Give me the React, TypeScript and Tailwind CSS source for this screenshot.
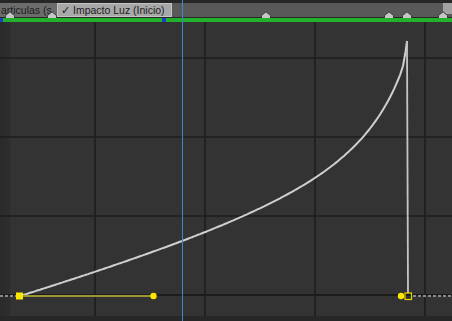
import React from 'react';

const markers = [10, 52, 266, 389, 407, 443];
const vGrid = [95, 205, 315, 425];
const hGrid = [58, 137, 216];

// speed curve, built from a rough fit of the reference
const curvePath = () => {
  const pts: string[] = [];
  for (let x = 20; x <= 400; x += 2) {
    const u = x - 20;
    const drop = 0.273 * u + (18.5 * u) / (440 - u);
    pts.push(`${x},${(296 - drop).toFixed(1)}`);
  }
  pts.push('403,66', '405.5,52', '407,41');
  return 'M' + pts.join(' L');
};

const Marker = ({ x }: { x: number }) => (
  <svg className="absolute top-[8px]" style={{ left: x - 6 }} width="12" height="10" viewBox="0 0 12 10">
    <path d="M1.5 9.5 V4.5 L6 0.8 L10.5 4.5 V9.5 Z" fill="#c6c6c6" stroke="#3a3a3a" strokeWidth="1" />
  </svg>
);

const App = () => {
  return (
    <div className="relative w-[452px] h-[321px] overflow-hidden bg-[#333333] flex flex-col font-['Liberation_Sans',sans-serif]">
      {/* top strip */}
      <div className="h-[3px] bg-[#262626] shrink-0" />
      <div className="relative h-[14px] bg-[#595959] shrink-0 flex items-stretch">
        <div className="w-[57px] bg-[#6c6c6c] whitespace-nowrap text-[10.5px] leading-[14px] text-[#1c1c1c] pl-[1px]">
          articulas (s
        </div>
        <div className="flex items-center gap-[3px] w-[115px] bg-[#a8a8a8] border border-[#c4c4c4] text-[10.5px] leading-[12px] text-[#1c1c1c] pl-[3px] whitespace-nowrap">
          <span className="text-[11px]">✓</span>
          <span>Impacto Luz (Inicio)</span>
        </div>
        <div className="absolute right-0 top-0 w-[9px] h-[11px] bg-[#a2a2a2]" />
        {markers.map((m) => (
          <Marker key={m} x={m} />
        ))}
      </div>
      <div className="h-px bg-[#262626] shrink-0" />
      <div className="relative h-[4px] bg-[#23b02c] shrink-0">
        <div className="absolute left-0 top-0 w-[3px] h-[4px] bg-[#1d3fc4]" />
        <div className="absolute left-[162px] top-0 w-[4px] h-[4px] bg-[#1d3fc4]" />
      </div>

      {/* graph */}
      <div className="relative flex-1 bg-[linear-gradient(to_right,#2a2a2a_0px,#2d2d2d_9px,#333333_11px)]">
        <svg className="block" width="452" height="294" viewBox="0 22 452 294">
          {vGrid.map((x) => (
            <line key={x} x1={x} y1={22} x2={x} y2={316} stroke="#1c1c1c" strokeWidth="1.5" />
          ))}
          {hGrid.map((y) => (
            <line key={y} x1={0} y1={y} x2={452} y2={y} stroke="#1e1e1e" strokeWidth="1.5" />
          ))}
          <line x1={0} y1={295} x2={452} y2={295} stroke="#1c1c1c" strokeWidth="2" />
          <line x1={0} y1={296} x2={16} y2={296} stroke="#8a8a8a" strokeWidth="2" strokeDasharray="3 2" />
          <line x1={413} y1={296} x2={452} y2={296} stroke="#8a8a8a" strokeWidth="2" strokeDasharray="3 2" />
          <path d={curvePath()} fill="none" stroke="#cfcfcf" strokeWidth="2" strokeLinejoin="round" />
          <line x1={407} y1={41} x2={408} y2={293} stroke="#c4c4c4" strokeWidth="1.8" />
          <line x1={23} y1={296} x2={153} y2={296} stroke="#9c9630" strokeWidth="2" />
          <rect x={16} y={292.5} width={7} height={7} fill="#fde600" />
          <circle cx={153.5} cy={296} r={3.2} fill="#fde600" />
          <circle cx={401} cy={296} r={3.2} fill="#fde600" />
          <rect x={405} y={293} width={6.5} height={6.5} fill="none" stroke="#e9d400" strokeWidth="1.2" />
        </svg>
      </div>
      <div className="h-[5px] bg-[#272727] shrink-0" />

      {/* playhead */}
      <div className="absolute left-[181.5px] top-0 w-[1.5px] h-full bg-[#3f86cf]" />
    </div>
  );
};

export default App;
